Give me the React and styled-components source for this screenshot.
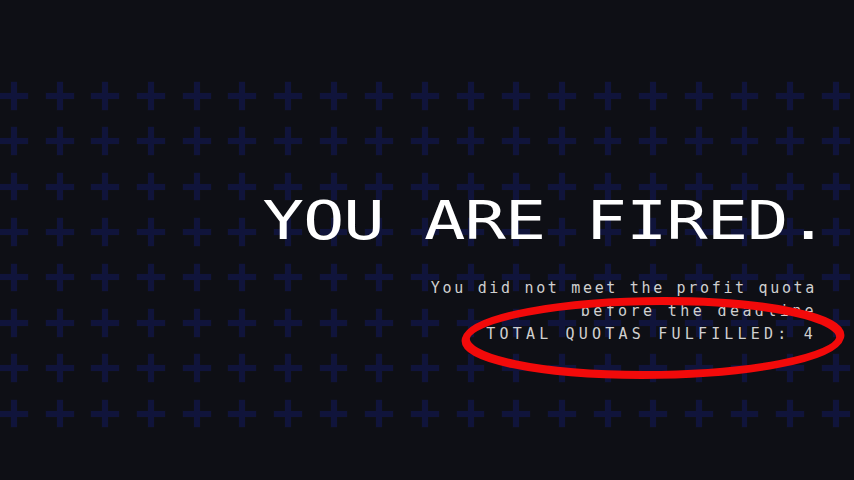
import React from "react";
import styled, { createGlobalStyle } from "styled-components";

const GlobalStyle = createGlobalStyle`
  html, body { margin: 0; padding: 0; background: #0e0f15; }
  body { font-family: "DejaVu Sans Mono", "Liberation Mono", monospace; }
`;

const crossTile = encodeURIComponent(
  `<svg xmlns="http://www.w3.org/2000/svg" width="45.67" height="45.43" viewBox="0 0 45.67 45.43"><g fill="#10143b"><rect x="8.83" y="19.71" width="28" height="6"/><rect x="19.83" y="8.71" width="6" height="28"/></g></svg>`
);

const Screen = styled.main`
  position: relative;
  width: 854px;
  height: 480px;
  overflow: hidden;
  background: #0e0f15;
  padding-top: 73.3px;
  box-sizing: border-box;
`;

const PatternBand = styled.section`
  height: 363.4px;
  background-image: url("data:image/svg+xml,${crossTile}");
  background-size: 45.67px 45.43px;
  background-position: -8.83px 0;
  background-repeat: repeat;
  display: flex;
  flex-direction: column;
  align-items: flex-end;
  padding: 120.7px 37px 0 0;
  box-sizing: border-box;
`;

const Title = styled.h1`
  margin: 0 -11px 29px 0;
  font-family: "DejaVu Sans Mono", monospace;
  font-weight: normal;
  font-size: 53px;
  line-height: 53px;
  letter-spacing: -0.85px;
  color: #ffffff;
  white-space: nowrap;
  transform: scaleX(1.3);
  transform-origin: right center;
`;

const Line = styled.p`
  margin: 0;
  font-family: "DejaVu Sans Mono", monospace;
  font-size: 15px;
  line-height: ${(p) => p.$lh}px;
  letter-spacing: ${(p) => p.$ls}px;
  color: #d0d0d0;
  white-space: nowrap;
`;

const Mark = styled.svg`
  position: absolute;
  left: 455px;
  top: 292px;
  width: 395px;
  height: 94px;
  overflow: visible;
`;

export default function App() {
  return (
    <>
      <GlobalStyle />
      <Screen>
        <PatternBand>
          <Title>YOU ARE FIRED.</Title>
          <Line $lh={24} $ls={2.67}>You did not meet the profit quota</Line>
          <Line $lh={23.5} $ls={3.4}>before the deadline</Line>
          <Line $lh={23.5} $ls={4.2}>TOTAL QUOTAS FULFILLED: 4</Line>
        </PatternBand>
        <Mark viewBox="0 0 395 94">
          <ellipse
            cx="198"
            cy="46"
            rx="187"
            ry="37"
            fill="none"
            stroke="#f20a0a"
            strokeWidth="8"
            transform="translate(198 46) skewX(-15) translate(-198 -46)"
          />
        </Mark>
      </Screen>
    </>
  );
}
